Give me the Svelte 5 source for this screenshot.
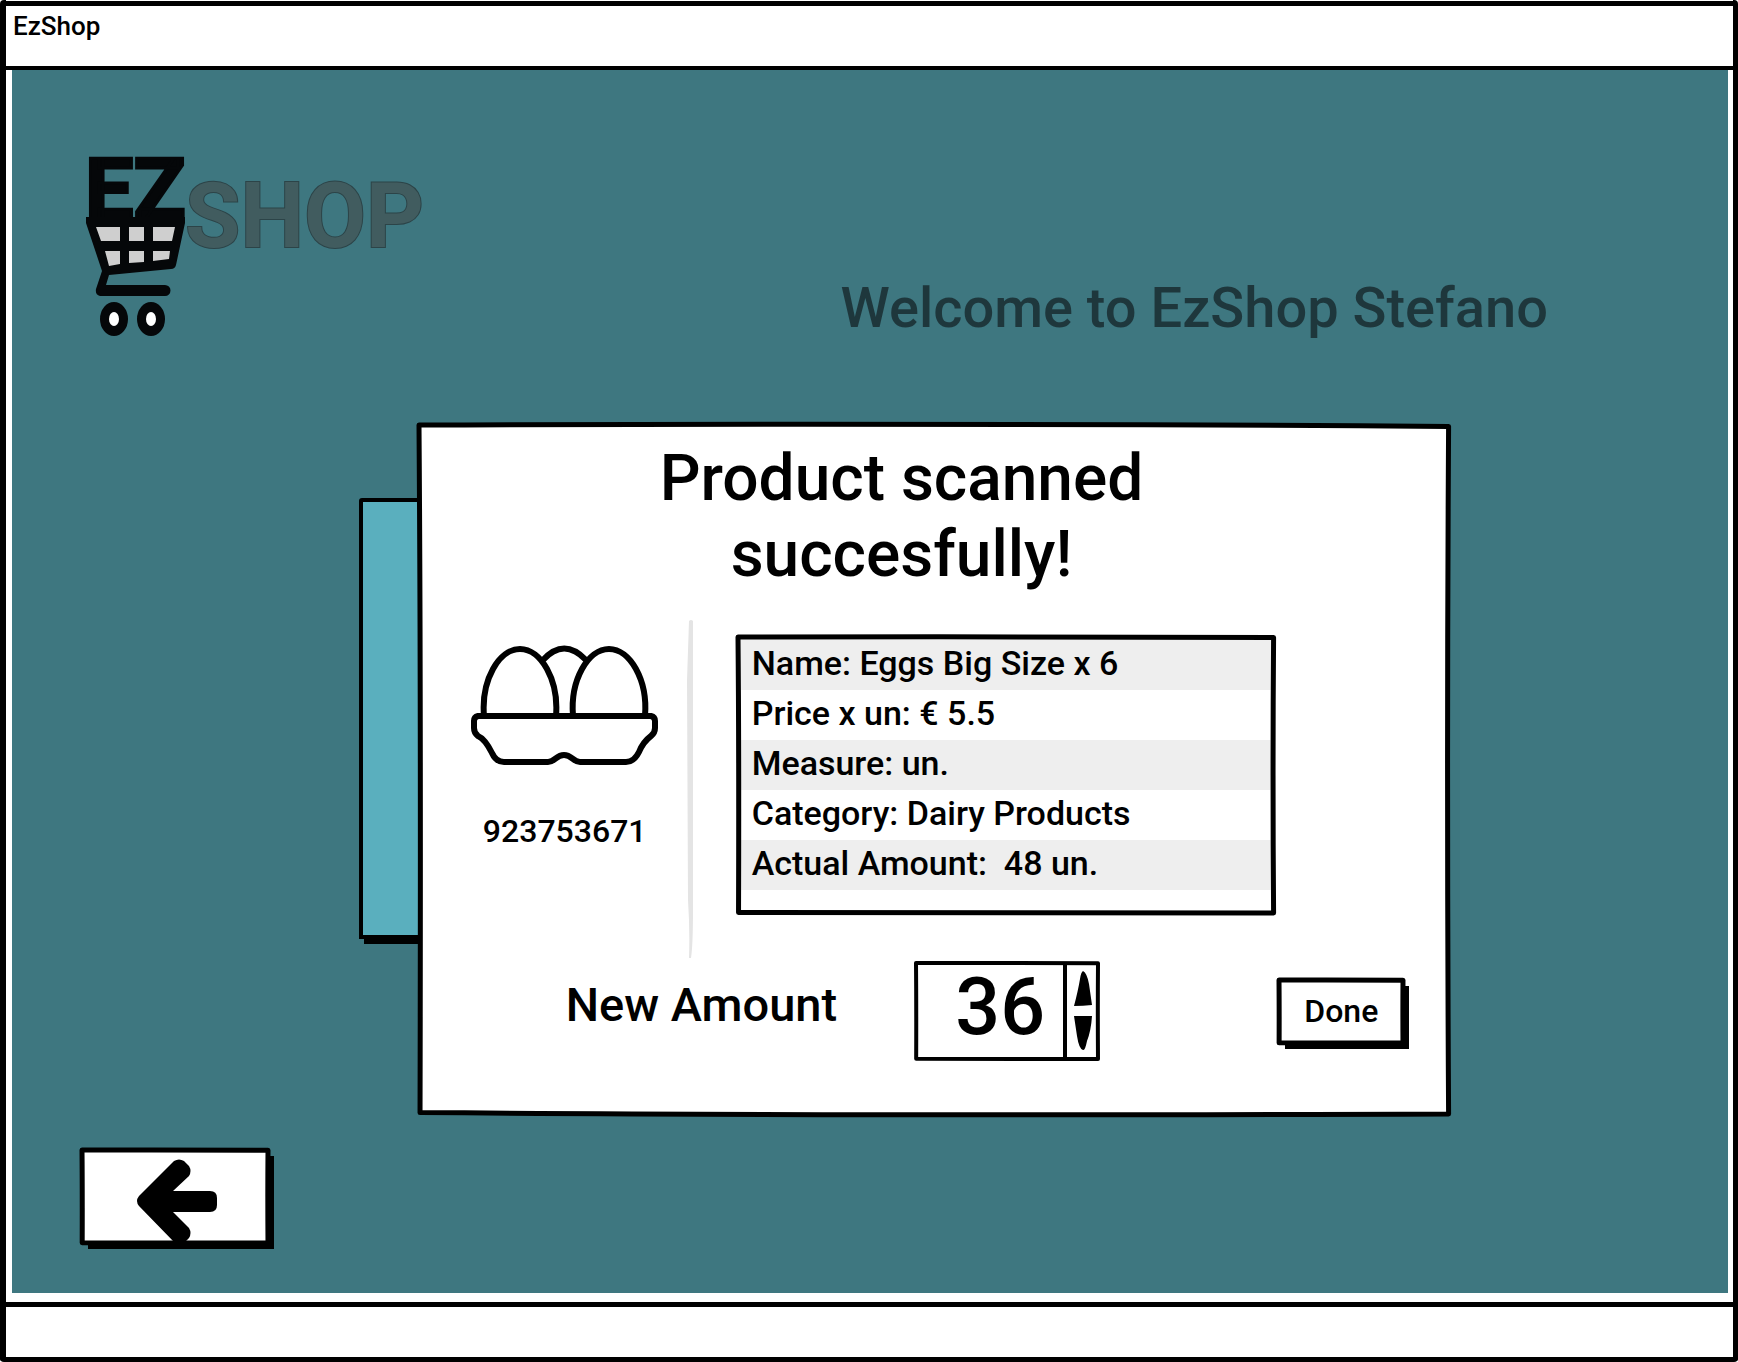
<script>
  let amount = $state(36);
  const details = [
    'Name: Eggs Big Size x 6',
    'Price x un: € 5.5',
    'Measure: un.',
    'Category: Dairy Products',
    'Actual Amount:\u00a0 48 un.'
  ];
</script>

{#snippet sketch()}
  <svg class="sketch" viewBox="0 0 1000 1000" preserveAspectRatio="none" aria-hidden="true">
    <path d="M0 0 Q500 -3 1000 2 Q998 500 1000 1000 Q400 1003 1 998 Q2 400 0 0 Z" />
  </svg>
{/snippet}

<div class="window">
  <header class="titlebar">EzShop</header>

  <main class="screen">
    <div class="top">
      <svg class="logo" viewBox="0 0 340 226" role="img" aria-label="EZ SHOP">
        <text class="ez" x="-1" y="104">EZ</text>
        <text class="shop" x="99" y="132">SHOP</text>
        <path
          d="M0 102 H99 V108 L90 150 Q89 154 85 154 L23 160 L20 170 H79 A5 5 0 0 1 79 181 H14 Q9 180 10 174 L16 156 L0 108 Z"
          fill="#050709"
        />
        <g fill="#cfcfcf">
          <path d="M10 112 H34 V126 H15 Z M43 112 H58 V126 H43 Z M67 112 H89 L86 126 H67 Z" />
          <path d="M19 136 H34 V149 L23 151 Z M43 136 H58 V147 L43 148 Z M67 136 H84 L83 144 L67 146 Z" />
        </g>
        <g fill="#050709">
          <ellipse cx="28" cy="204" rx="14" ry="17" />
          <ellipse cx="65" cy="204" rx="14" ry="17" />
        </g>
        <g fill="#fff">
          <ellipse cx="28" cy="204" rx="5" ry="7" />
          <ellipse cx="65" cy="204" rx="5" ry="7" />
        </g>
      </svg>
      <h1>Welcome to EzShop Stefano</h1>
    </div>

    <div class="stage">
      <div class="side-panel"></div>
      <section class="dialog" aria-labelledby="dialog-title">
        {@render sketch()}
        <h2 id="dialog-title">Product scanned<br />succesfully!</h2>

        <div class="product">
          <div class="item">
            <svg class="eggs" viewBox="0 0 190 122" fill="none" stroke="#000" stroke-width="6" aria-hidden="true">
              <path d="M73 15 Q94 -8 116 15" />
              <path d="M14 71 C11 35 29 4 50 4 C71 4 89 35 86 71" />
              <path d="M103 71 C100 35 118 4 139 4 C160 4 178 35 175 71" />
              <path
                stroke-linejoin="round"
                d="M8 71 H181 Q185 72 185 76 V83 Q185 88 181 91 Q173 97 169 107 Q164 117 156 117 H110 C103 117 102 110 94 110 C86 110 85 117 78 117 H34 Q26 117 22 108 Q15 94 8 91 Q4 88 4 83 V76 Q4 72 8 71 Z"
              />
            </svg>
            <span class="barcode">923753671</span>
          </div>
          <svg class="divider" viewBox="0 0 6 338" preserveAspectRatio="none" aria-hidden="true">
            <path d="M2 1 Q4 -1 6 1 V290 Q6 325 4 338 H2 Q3 310 1 280 L0 60 Z" fill="#e4e4e4" />
          </svg>
          <div class="details">
            {@render sketch()}
            <table>
              <tbody>
                {#each details as line}
                  <tr><td>{line}</td></tr>
                {/each}
              </tbody>
            </table>
          </div>
        </div>

        <form class="actions" onsubmit={(e) => e.preventDefault()}>
          <label for="amount">New Amount</label>
          <div class="stepper">
            {@render sketch()}
            <input id="amount" type="number" bind:value={amount} />
            <div class="steps">
              <button type="button" aria-label="Increase" onclick={() => amount++}>
                <svg viewBox="0 0 18 35"><path d="M9 0 Q13 2 15 13 L18 34 Q9 35 0 35 Q4 20 6 8 Q7 1 9 0 Z" /></svg>
              </button>
              <button type="button" aria-label="Decrease" onclick={() => amount--}>
                <svg viewBox="0 0 18 35"><path d="M0 0 H18 Q17 15 13 25 Q11 35 9 34 Q5 33 3 20 Z" /></svg>
              </button>
            </div>
          </div>
          <button class="raised done" type="submit">{@render sketch()}Done</button>
        </form>
      </section>
    </div>

    <button class="raised back" type="button" aria-label="Back">
      {@render sketch()}
      <svg class="arrow" viewBox="0 0 84 88" aria-hidden="true">
        <path
          d="M4 38 L39 3 Q44 0 49 3 L54 8 Q57 13 54 18 L38 33 H75 Q82 33 82 40 V47 Q82 54 75 54 H38 L54 70 Q57 75 54 80 L49 85 Q44 88 39 84 L4 48 Q0 43 4 38 Z"
        />
      </svg>
    </button>
  </main>

  <footer></footer>
</div>

<style>
  :global(body) {
    margin: 0;
    background: #fff;
  }

  .window {
    box-sizing: border-box;
    min-height: 100vh;
    display: flex;
    flex-direction: column;
    padding-top: 1px;
    border: solid #000;
    border-width: 0 5px 5px 6px;
    border-radius: 4px;
    background: #fff;
    color: #000;
    font-family: Roboto, 'Liberation Sans', sans-serif;
    font-weight: 500;
  }

  .titlebar {
    box-sizing: border-box;
    height: 69px;
    padding: 4px 7px;
    border: solid #000;
    border-width: 5px 0 4px;
    font-size: 26px;
    line-height: 32px;
  }

  .screen {
    flex: 1;
    display: flex;
    flex-direction: column;
    align-items: flex-start;
    margin: 0 5px 9px 6px;
    padding: 45px 0 50px;
    background: #3e7780;
  }

  footer {
    height: 50px;
    border-top: 5px solid #000;
  }

  .sketch {
    position: absolute;
    inset: 0;
    width: 100%;
    height: 100%;
    overflow: visible;
    fill: none;
    stroke: #000;
    stroke-width: 5px;
    stroke-linejoin: round;
    pointer-events: none;
  }

  .sketch path {
    vector-effect: non-scaling-stroke;
  }

  .top {
    align-self: stretch;
    display: flex;
    justify-content: space-between;
    align-items: flex-end;
    padding: 0 180px 0 74px;
  }

  .logo {
    width: 340px;
    height: 226px;
    overflow: visible;
  }

  .ez {
    fill: #050709;
    stroke: #050709;
    stroke-width: 3px;
    font-size: 86px;
    font-weight: 700;
  }

  .shop {
    fill: #415c5f;
    stroke: #2c4448;
    stroke-width: 2px;
    paint-order: stroke;
    font-size: 90px;
    font-weight: 700;
  }

  h1 {
    margin: 0;
    color: #1e373c;
    font-size: 56px;
    font-weight: 500;
    line-height: 66px;
  }

  .stage {
    position: relative;
    box-sizing: border-box;
    width: 60%;
    margin: 84px 0 0 23.7%;
  }

  .side-panel {
    position: absolute;
    top: 73px;
    left: -60px;
    width: 80px;
    height: 433px;
    border: 4px solid #000;
    border-radius: 3px 0 0;
    background: #5aafbe;
    box-shadow: 5px 5px #000;
  }

  .dialog {
    position: relative;
    padding: 16px 0 53px;
    background: #fff;
  }

  h2 {
    margin: 0;
    padding-right: 64px;
    font-size: 64px;
    font-weight: 500;
    line-height: 76px;
    text-align: center;
  }

  .product {
    display: flex;
    align-items: flex-start;
    margin-top: 27px;
    padding-right: 175px;
  }

  .item {
    box-sizing: border-box;
    width: 268px;
    display: flex;
    flex-direction: column;
    align-items: center;
    gap: 44px;
    padding: 25px 0 0 24px;
  }

  .eggs {
    width: 190px;
    height: 122px;
  }

  .barcode {
    font-size: 32px;
    line-height: 40px;
  }

  .divider {
    width: 6px;
    height: 338px;
  }

  .details {
    position: relative;
    flex: 1;
    margin: 17px 0 0 45px;
    padding-bottom: 23px;
  }

  table {
    width: 100%;
    border-collapse: collapse;
  }

  td {
    height: 47px;
    padding: 0 0 3px 14px;
    font-size: 34px;
    line-height: 47px;
    white-space: pre;
  }

  tr:first-child td {
    padding-top: 3px;
  }

  tr:nth-child(odd) {
    background: #eee;
  }

  .actions {
    display: flex;
    align-items: center;
    margin-top: 3px;
    padding: 0 45px 0 147px;
  }

  label {
    padding-bottom: 12px;
    font-size: 47px;
    line-height: 56px;
  }

  .stepper {
    position: relative;
    display: flex;
    height: 96px;
    margin: 2px auto 2px 79px;
  }

  .stepper .sketch,
  .raised .sketch {
    stroke-width: 4px;
  }

  input {
    box-sizing: border-box;
    width: 151px;
    padding: 0 18px 8px 0;
    border: 0;
    border-right: 4px solid #000;
    outline: 0;
    background: none;
    color: inherit;
    font: inherit;
    font-size: 79px;
    text-align: right;
    appearance: textfield;
  }

  input::-webkit-inner-spin-button {
    appearance: none;
    margin: 0;
  }

  .steps {
    display: flex;
    flex-direction: column;
    justify-content: center;
    gap: 10px;
    width: 31px;
  }

  button {
    padding: 0;
    border: 0;
    background: none;
    color: inherit;
    font: inherit;
    cursor: pointer;
  }

  .steps svg {
    display: block;
    width: 18px;
    height: 35px;
    margin: 0 auto;
  }

  .raised {
    position: relative;
    background: #fff;
    box-shadow: 6px 6px #000;
  }

  .raised .sketch {
    stroke-width: 5px;
  }

  .done {
    padding: 0 25px;
    font-size: 32px;
    line-height: 63px;
  }

  .back {
    width: 186px;
    height: 93px;
    margin: auto 0 0 70px;
  }

  .arrow {
    display: block;
    width: 84px;
    height: 88px;
    margin: 8px auto 0 53px;
  }
</style>
